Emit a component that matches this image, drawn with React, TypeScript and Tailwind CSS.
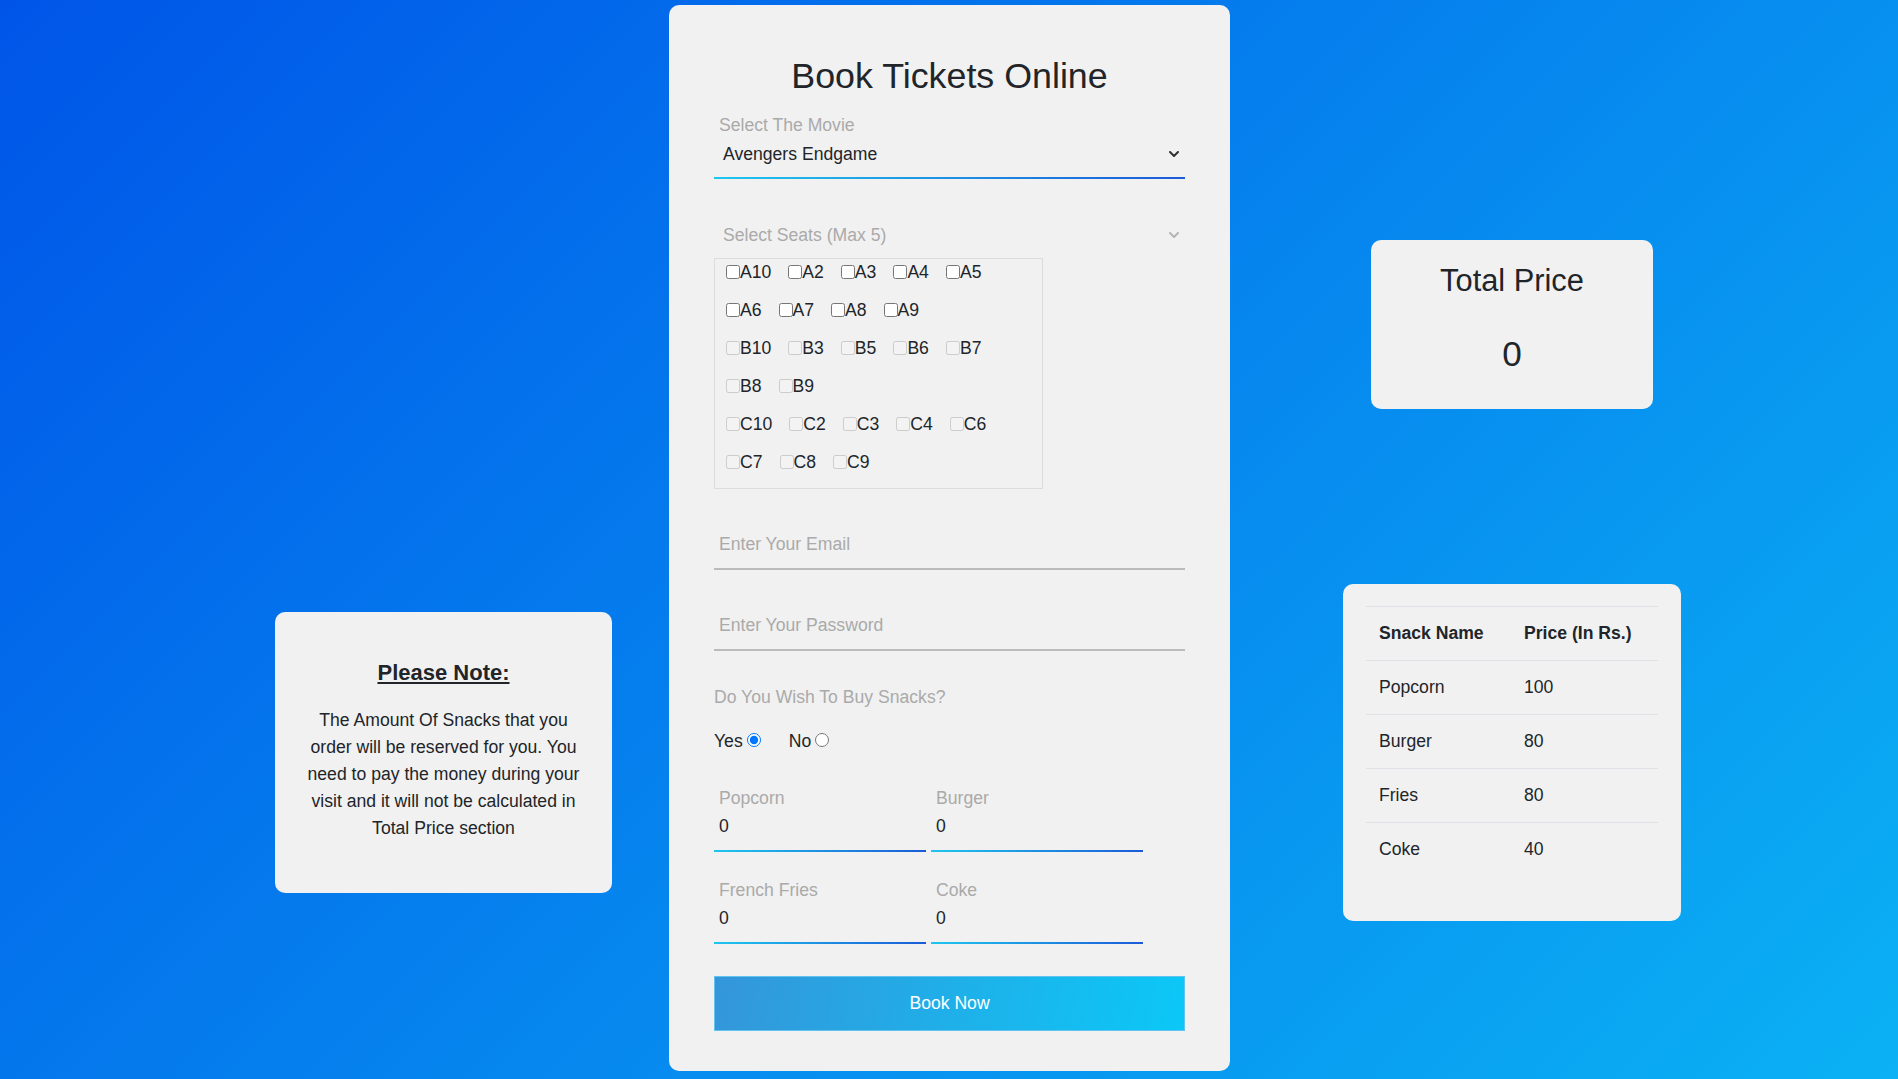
import React from 'react';

const seatRows: string[][] = [
  ['A10', 'A2', 'A3', 'A4', 'A5'],
  ['A6', 'A7', 'A8', 'A9'],
  ['B10', 'B3', 'B5', 'B6', 'B7'],
  ['B8', 'B9'],
  ['C10', 'C2', 'C3', 'C4', 'C6'],
  ['C7', 'C8', 'C9'],
];

const snacks = [
  { name: 'Popcorn', price: 100 },
  { name: 'Burger', price: 80 },
  { name: 'Fries', price: 80 },
  { name: 'Coke', price: 40 },
];

function Chevron({ color }: { color: string }) {
  return (
    <svg width="10" height="6" viewBox="0 0 10 6" fill="none">
      <path d="M1 1l4 4 4-4" stroke={color} strokeWidth="2" strokeLinecap="round" strokeLinejoin="round" />
    </svg>
  );
}

function GradientLine() {
  return <div className="h-[2px] w-full bg-[linear-gradient(to_right,#1ec6ee,#1c5bd8)]" />;
}

function SnackField({ label }: { label: string }) {
  return (
    <div className="w-[212px]">
      <div className="pl-[5px] leading-[26px] text-[#aaaaaa]">{label}</div>
      <input
        type="number"
        defaultValue={0}
        className="block h-[39px] w-full pb-[9px] pl-[5px] text-[#212529] outline-none [appearance:textfield]"
      />
      <GradientLine />
    </div>
  );
}

export default function App() {
  return (
    <div className="h-[1079px] w-full overflow-hidden bg-[linear-gradient(135deg,#0055e8,#0bb1f4)] font-['Liberation_Sans',Arial,sans-serif] text-[17.6px] leading-[1.5] text-[#212529]">
      <div className="flex items-start">
        {/* note card */}
        <div className="ml-[275px] mt-[612px] h-[281px] w-[337px] rounded-[10px] bg-[#f1f1f1] px-[22px] pt-[48px] text-center">
          <h5 className="text-[22px] font-bold leading-[26.4px] underline">Please Note:</h5>
          <p className="mt-[21px] leading-[27px]">
            The Amount Of Snacks that you order will be reserved for you. You need to pay the money during
            your visit and it will not be calculated in Total Price section
          </p>
        </div>

        {/* booking form */}
        <div className="ml-[57px] mt-[5px] w-[561px] rounded-[10px] bg-[#f1f1f1] px-[45px] pb-[40px] pt-[50px]">
          <h1 className="text-center text-[35.8px] leading-[42px]">Book Tickets Online</h1>

          <div className="mt-[15px] pl-[5px] leading-[26px] text-[#aaaaaa]">Select The Movie</div>
          <div className="flex h-[39px] items-start justify-between pl-[9px] pr-[6px] pt-[3px]">
            <span className="leading-[26px]">Avengers Endgame</span>
            <span className="mt-[10px]">
              <Chevron color="#333333" />
            </span>
          </div>
          <GradientLine />

          <div className="mt-[43px] flex h-[26px] items-center justify-between pl-[9px] pr-[6px] text-[#aaaaaa]">
            <span>Select Seats (Max 5)</span>
            <Chevron color="#b5b5b5" />
          </div>

          <div className="mt-[10px] flex h-[231px] w-[329px] flex-col gap-y-[12px] border border-[#dcdcdc] pl-[11px] pt-0">
            {seatRows.map((row, idx) => (
              <div key={idx} className="flex h-[26px] items-center gap-x-[17px]">
                {row.map((seat) => (
                  <label key={seat} className="flex items-center leading-[26px]">
                    <input
                      type="checkbox"
                      disabled={!seat.startsWith('A')}
                      className="h-[14px] w-[14px]"
                    />
                    {seat}
                  </label>
                ))}
              </div>
            ))}
          </div>

          <input
            type="email"
            placeholder="Enter Your Email"
            className="mt-[36px] block h-[45px] w-full border-b-2 border-[#bbbbbb] pb-[4px] pl-[5px] outline-none placeholder:text-[#aaaaaa]"
          />
          <input
            type="password"
            placeholder="Enter Your Password"
            className="mt-[36px] block h-[45px] w-full border-b-2 border-[#bbbbbb] pb-[5px] pl-[5px] outline-none placeholder:text-[#aaaaaa]"
          />

          <div className="mt-[33px] leading-[26px] text-[#aaaaaa]">Do You Wish To Buy Snacks?</div>
          <div className="mt-[18px] flex h-[26px] items-center">
            <label className="flex items-center">
              Yes
              <input type="radio" name="snacks" defaultChecked className="mb-[2px] ml-[4px] mr-[28px] h-[14px] w-[14px]" />
            </label>
            <label className="flex items-center">
              No
              <input type="radio" name="snacks" className="mb-[2px] ml-[4px] h-[14px] w-[14px]" />
            </label>
          </div>

          <div className="mt-[31px] flex gap-[5px]">
            <SnackField label="Popcorn" />
            <SnackField label="Burger" />
          </div>
          <div className="mt-[25px] flex gap-[5px]">
            <SnackField label="French Fries" />
            <SnackField label="Coke" />
          </div>

          <button className="mt-[32px] block h-[55px] w-full border border-[#62c4ee] bg-[linear-gradient(100deg,#3496da,#0bc8f7)] text-white">
            Book Now
          </button>
        </div>

        {/* right column */}
        <div className="ml-[113px] flex w-[338px] flex-col items-center">
          <div className="mt-[240px] h-[169px] w-[282px] rounded-[10px] bg-[#f1f1f1] pt-[22px] text-center">
            <h3 className="text-[30.8px] leading-[37px]">Total Price</h3>
            <div className="mt-[34px] text-[35.2px] leading-[42px]">0</div>
          </div>

          <div className="mt-[175px] h-[337px] w-full rounded-[10px] bg-[#f1f1f1] px-[23px] pt-[22px]">
            <div className="grid grid-cols-[145px_1fr]">
              <div className="border-t border-[#dee2e6] px-[13px] py-[13px] font-bold leading-[27px]">Snack Name</div>
              <div className="border-t border-[#dee2e6] px-[13px] py-[13px] font-bold leading-[27px]">Price (In Rs.)</div>
              {snacks.map((s) => (
                <React.Fragment key={s.name}>
                  <div className="border-t border-[#dee2e6] px-[13px] py-[13px] leading-[27px]">{s.name}</div>
                  <div className="border-t border-[#dee2e6] px-[13px] py-[13px] leading-[27px]">{s.price}</div>
                </React.Fragment>
              ))}
            </div>
          </div>
        </div>
      </div>
    </div>
  );
}
